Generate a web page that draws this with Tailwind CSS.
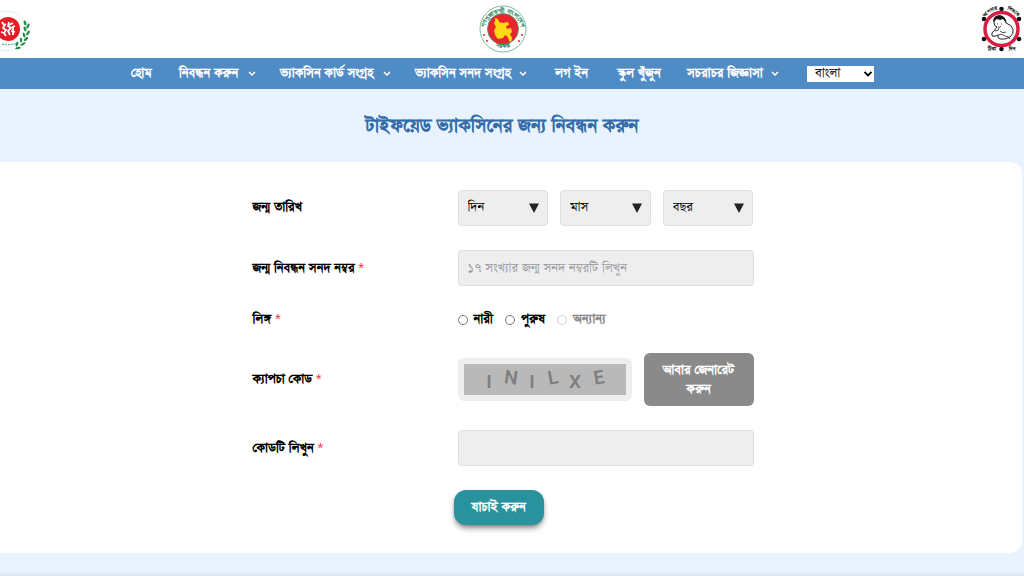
<!DOCTYPE html>
<html lang="bn">
<head>
<meta charset="utf-8">
<meta name="viewport" content="width=device-width, initial-scale=1">
<title>টাইফয়েড ভ্যাকসিনের জন্য নিবন্ধন করুন</title>
<script src="https://cdn.jsdelivr.net/npm/@tailwindcss/browser@4"></script>
</head>
<body class="flex min-h-screen flex-col overflow-x-hidden bg-[#e8f3fe] font-['FreeSerif',monospace] text-[15px] leading-[18px] text-black">
<header class="grid h-[58px] grid-cols-3 items-center bg-white">
  <!-- Health directorate emblem -->
  <svg class="-ml-6 h-[52px] w-14 justify-self-start" viewBox="0 0 56 52" role="img" aria-label="স্বাস্থ্য অধিদপ্তর">
    <circle cx="31" cy="28" r="20" fill="#fcfefd" stroke="#e3f2e9"/>
    <circle cx="32" cy="26" r="12" fill="#e51d25"/>
    <path d="M26 19l2 3 2-1M29 22l-2 3 3 2-2 3 2 3M33 19l-1 4 3 2-3 3 2 4M33 22l4-2M36 24l3-1M37 24l0 8M35 28l4 1M28 30l-3-1" fill="none" stroke="#fff" stroke-width="1.800"/>
    <path d="M26 41q7 2 16-1" fill="none" stroke="#51a171" stroke-dasharray="2 1"/>
    <g fill="#238b49">
      <ellipse cx="49" cy="20" rx="1.300" ry="2.600" transform="rotate(-15 49 20)"/><ellipse cx="52" cy="23" rx="1.200" ry="2.800" transform="rotate(25 52 23)"/>
      <ellipse cx="49" cy="26" rx="1.200" ry="2.600" transform="rotate(-20 49 26)"/><ellipse cx="52" cy="30" rx="1.200" ry="2.800" transform="rotate(35 52 30)"/>
      <ellipse cx="48" cy="32" rx="1.200" ry="2.600" transform="rotate(-15 48 32)"/><ellipse cx="50" cy="36" rx="1.200" ry="2.800" transform="rotate(50 50 36)"/>
      <ellipse cx="45" cy="37" rx="1.200" ry="2.600"/><ellipse cx="47" cy="41" rx="1.200" ry="2.800" transform="rotate(65 47 41)"/>
      <ellipse cx="41" cy="41" rx="1.200" ry="2.500" transform="rotate(20 41 41)"/><ellipse cx="42" cy="45" rx="1.200" ry="2.800" transform="rotate(80 42 45)"/>
    </g>
  </svg>
  <!-- Government seal -->
  <svg class="mr-[18px] size-12 justify-self-center" viewBox="0 0 48 48" role="img" aria-label="গণপ্রজাতন্ত্রী বাংলাদেশ সরকার">
    <circle cx="24" cy="24" r="23" fill="#fff" stroke="#7dbb9d"/>
    <circle cx="24" cy="24" r="15.500" fill="#e9252b" stroke="#4b9a70" stroke-width=".8"/>
    <path d="M16 13l3 1 1 3 4 1 5-1 1 3-3 1 1 3 4-1 1 4-2 2 2 4-1 4-2-1-1-4-3-2-2 3-5 1-3-4-1-5 2-3-2-4 1-2z" fill="#fbd916"/>
    <path id="sealTop" d="M7 32A18 18 0 1 1 41 32" fill="none"/>
    <path id="sealBottom" d="M10 38A21 21 0 0 0 38 38" fill="none"/>
    <g fill="#398f68" font-size="7" font-weight="700" text-anchor="middle">
      <text><textPath href="#sealTop" startOffset="50%">গণপ্রজাতন্ত্রী বাংলাদেশ</textPath></text>
      <text><textPath href="#sealBottom" startOffset="50%">সরকার</textPath></text>
    </g>
    <g fill="#e9252b"><circle cx="5" cy="30" r="1"/><circle cx="8" cy="36" r="1"/><circle cx="43" cy="30" r="1"/><circle cx="40" cy="36" r="1"/></g>
  </svg>
  <!-- Immunisation programme emblem -->
  <svg class="h-12 w-11 justify-self-end" viewBox="0 0 44 48" role="img" aria-label="আপনার শিশুকে টিকা দিন">
    <g fill="#111"><circle cx="21.500" cy="4" r="2.300"/><circle cx="21.500" cy="44" r="2.300"/><circle cx="4" cy="14" r="2.300"/><circle cx="4" cy="34" r="2.300"/><circle cx="39" cy="14" r="2.300"/><circle cx="39" cy="34" r="2.300"/></g>
    <circle cx="21.500" cy="24" r="16.500" fill="#fff" stroke="#d91c41" stroke-width="3.500"/>
    <path d="M14 18q0-6 6-6 6 0 6 6 6 2 7 6 1 5-3 8-5 3-10 2-3-1-2-4-3 2-6 1-1-4 2-5 2-3 3-4-3-1-3-4z" fill="#fff" stroke="#222" stroke-width="1"/>
    <path d="M13 17q0-7 7-7 6 1 6 8l-3-4-3 1-3-1z" fill="#181818"/>
    <path d="M17 19l1 0M21 19l1 0M18 22q2 1 3-1M20 26q3 3 6 1M18 30q4-2 7 1M25 31q4 0 5 3M15 26q4 0 4-3" fill="none" stroke="#222" stroke-width=".8"/>
    <path id="epiTop" d="M2 20A20 20 0 0 1 41 20" fill="none"/>
    <g fill="#222" font-size="6" font-weight="700" text-anchor="middle">
      <text><textPath href="#epiTop" startOffset="29%">আপনার</textPath></text>
      <text><textPath href="#epiTop" startOffset="72%">শিশুকে</textPath></text>
      <text x="12" y="46">টিকা</text><text x="32" y="46">দিন</text>
    </g>
  </svg>
</header>

<nav class="flex h-[31px] items-center justify-center bg-[#4f8bc5] pr-[19px] font-bold whitespace-nowrap text-white" aria-label="প্রধান মেনু">
  <a href="#" class="w-12 shrink-0">হোম</a>
  <a href="#" class="flex w-[101px] shrink-0 items-center justify-between pr-6">নিবন্ধন করুন
    <svg class="size-2 shrink-0" viewBox="0 0 8 8" fill="none" stroke="currentColor" stroke-width="1.500"><path d="M1 2L4 5 7 2"/></svg></a>
  <a href="#" class="flex w-[135px] shrink-0 items-center justify-between pr-6">ভ্যাকসিন কার্ড সংগ্রহ
    <svg class="size-2 shrink-0" viewBox="0 0 8 8" fill="none" stroke="currentColor" stroke-width="1.500"><path d="M1 2L4 5 7 2"/></svg></a>
  <a href="#" class="flex w-[140px] shrink-0 items-center justify-between pr-7">ভ্যাকসিন সনদ সংগ্রহ
    <svg class="size-2 shrink-0" viewBox="0 0 8 8" fill="none" stroke="currentColor" stroke-width="1.500"><path d="M1 2L4 5 7 2"/></svg></a>
  <a href="#" class="w-[62px] shrink-0">লগ ইন</a>
  <a href="#" class="w-[70px] shrink-0">স্কুল খুঁজুন</a>
  <a href="#" class="flex w-[120px] shrink-0 items-center justify-between pr-7">সচরাচর জিজ্ঞাসা
    <svg class="size-2 shrink-0" viewBox="0 0 8 8" fill="none" stroke="currentColor" stroke-width="1.500"><path d="M1 2L4 5 7 2"/></svg></a>
  <span class="relative flex">
    <select aria-label="ভাষা" class="h-4 w-[67px] appearance-none bg-white pl-2 text-[15px] leading-4 font-normal text-black"><option>বাংলা</option><option>English</option></select>
    <svg class="pointer-events-none absolute top-1 right-0.5 size-2" viewBox="0 0 8 8" fill="none" stroke="#000" stroke-width="1.800"><path d="M.5 2L4 5.500 7.500 2"/></svg>
  </span>
</nav>

<h1 class="flex h-[73px] items-center justify-center pr-5 text-[22px] font-bold whitespace-nowrap text-[#336ca8]">টাইফয়েড ভ্যাকসিনের জন্য নিবন্ধন করুন</h1>

<main class="mr-0.5 rounded-r-xl bg-white pt-7 pr-4 pb-7">
  <form class="mx-auto grid w-[501px] max-w-full grid-cols-[205px_1fr] items-center gap-y-6">
    <span class="font-bold" id="dob">জন্ম তারিখ</span>
    <div class="grid grid-cols-3 gap-3" role="group" aria-labelledby="dob">
      <span class="relative flex"><select aria-label="দিন" class="h-9 w-full appearance-none rounded border border-[#dedede] bg-[#eeeeee] pl-[9px]"><option>দিন</option></select>
        <svg class="pointer-events-none absolute top-3 right-2 size-3" viewBox="0 0 12 12" fill="#222"><path d="M1 1.500h10L6 11z"/></svg></span>
      <span class="relative flex"><select aria-label="মাস" class="h-9 w-full appearance-none rounded border border-[#dedede] bg-[#eeeeee] pl-[9px]"><option>মাস</option></select>
        <svg class="pointer-events-none absolute top-3 right-2 size-3" viewBox="0 0 12 12" fill="#222"><path d="M1 1.500h10L6 11z"/></svg></span>
      <span class="relative flex"><select aria-label="বছর" class="h-9 w-full appearance-none rounded border border-[#dedede] bg-[#eeeeee] pl-[9px]"><option>বছর</option></select>
        <svg class="pointer-events-none absolute top-3 right-2 size-3" viewBox="0 0 12 12" fill="#222"><path d="M1 1.500h10L6 11z"/></svg></span>
    </div>

    <label for="brn" class="font-bold whitespace-nowrap">জন্ম নিবন্ধন সনদ নম্বর <span class="font-['Liberation_Sans'] font-normal text-[#ee3545]">*</span></label>
    <input id="brn" type="text" placeholder="১৭ সংখ্যার জন্ম সনদ নম্বরটি লিখুন" class="h-9 w-full rounded border border-[#dedede] bg-[#eeeeee] px-[9px] placeholder:text-[#9a9ca2]">

    <span class="font-bold" id="gender">লিঙ্গ <span class="font-['Liberation_Sans'] font-normal text-[#ee3545]">*</span></span>
    <div class="flex h-[18px] items-center gap-3 font-bold whitespace-nowrap" role="radiogroup" aria-labelledby="gender">
      <label class="flex items-center gap-1.5"><input type="radio" name="gender" class="size-2.5 appearance-none rounded-full border border-[#767676] bg-white checked:border-4">নারী</label>
      <label class="flex items-center gap-1.5"><input type="radio" name="gender" class="size-2.5 appearance-none rounded-full border border-[#767676] bg-white checked:border-4">পুরুষ</label>
      <label class="flex items-center gap-1.5 text-[#8b8b8b]"><input type="radio" name="gender" disabled class="size-2.5 appearance-none rounded-full border border-[#d2d2d2] bg-white">অন্যান্য</label>
    </div>

    <span class="font-bold">ক্যাপচা কোড <span class="font-['Liberation_Sans'] font-normal text-[#ee3545]">*</span></span>
    <div class="grid grid-cols-[174px_1fr] items-center gap-3">
      <div class="h-[43px] rounded-md bg-[#eeeeee] p-1.5">
        <svg class="h-[31px] w-full bg-[#b9b9b9]" viewBox="0 0 162 31" role="img" aria-label="I N I L X E">
          <g fill="#7f7f7f" font-family="Roboto,sans-serif" font-size="19" font-weight="600" text-anchor="middle">
            <text x="25" y="24">I</text>
            <text x="47" y="20" transform="rotate(8 47 14)">N</text>
            <text x="68" y="24">I</text>
            <text x="89" y="20" transform="rotate(-10 89 14)">L</text>
            <text x="111" y="24">X</text>
            <text x="135" y="20" transform="rotate(-10 135 14)">E</text>
          </g>
        </svg>
      </div>
      <button type="button" class="h-[53px] rounded-md bg-[#8a8a8a] leading-[19px] font-bold whitespace-nowrap text-white">আবার জেনারেট<br>করুন</button>
    </div>

    <label for="code" class="font-bold">কোডটি লিখুন <span class="font-['Liberation_Sans'] font-normal text-[#ee3545]">*</span></label>
    <input id="code" type="text" class="h-9 w-full rounded border border-[#dedede] bg-[#eeeeee] px-[9px]">

    <button type="submit" class="col-start-2 -ml-1 h-[35px] w-[90px] rounded-xl bg-[#2a929c] font-bold whitespace-nowrap text-white shadow-md shadow-black/40">যাচাই করুন</button>
  </form>
</main>
<div class="mt-auto h-1 bg-linear-to-b from-[#e8f3fe] to-[#d8e2ec]"></div>
</body>
</html>
